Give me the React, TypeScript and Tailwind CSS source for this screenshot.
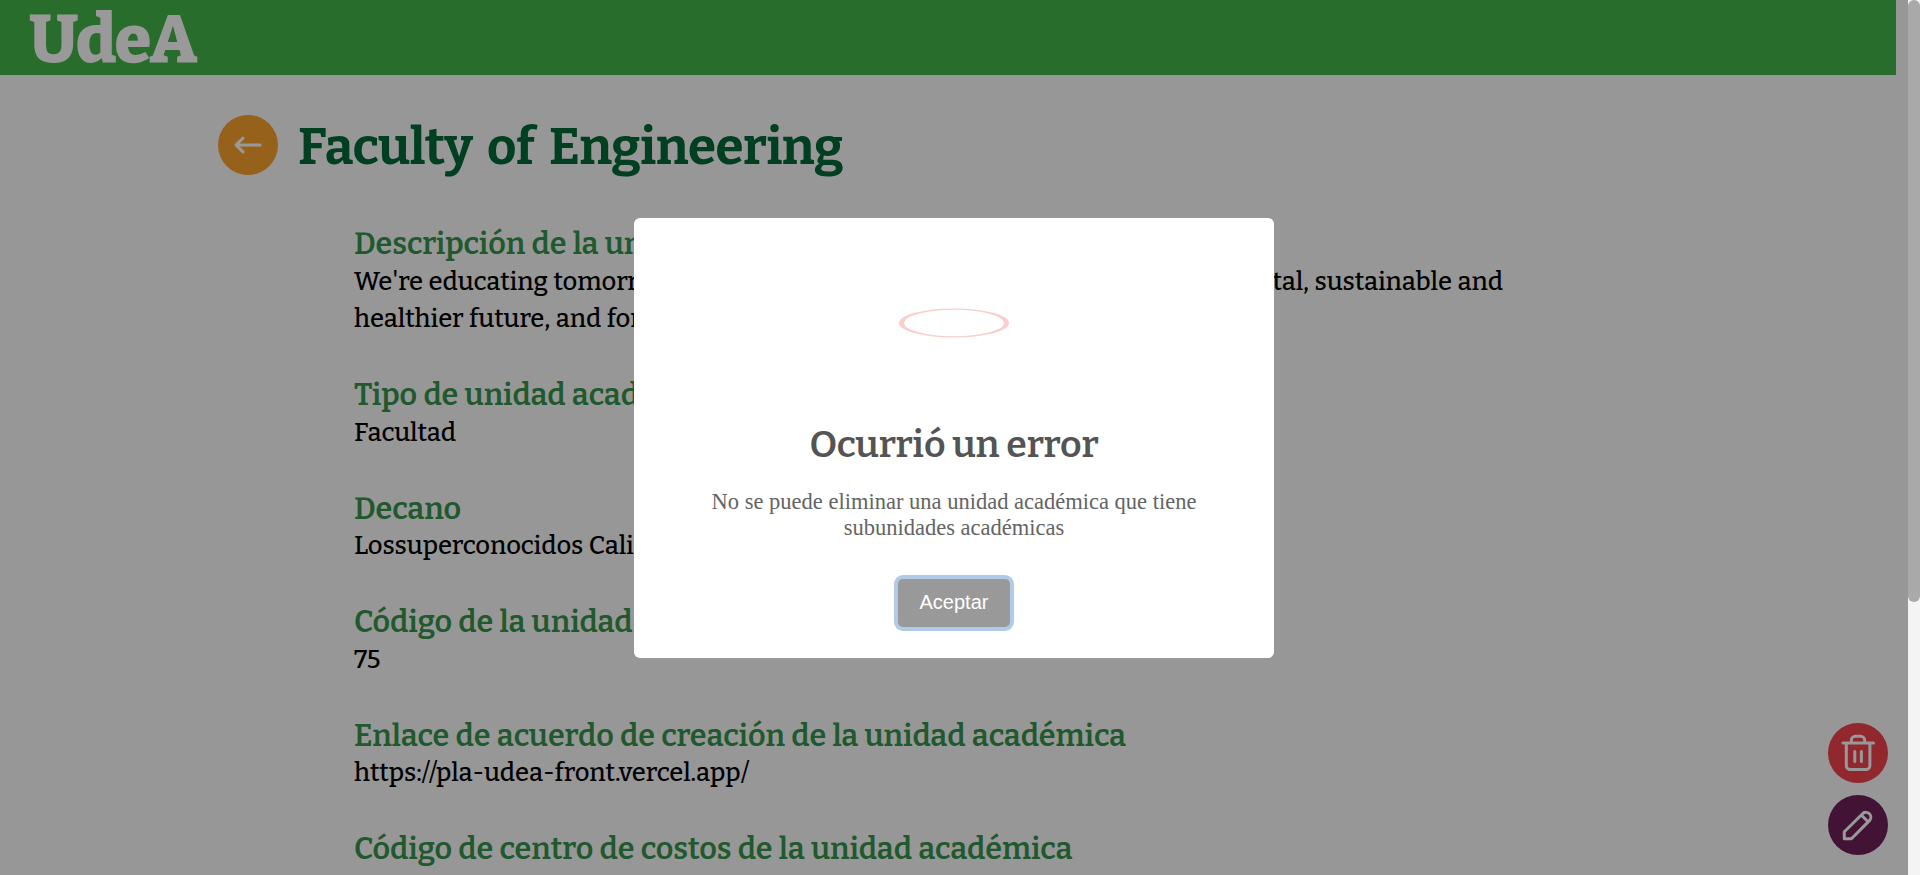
import type { ReactNode } from "react";

const slab = "font-['Bitter','Roboto_Serif','DejaVu_Serif',serif]";

const fields: { label: string; lines: ReactNode[] }[] = [
  {
    label: "Descripción de la unidad académica",
    lines: [
      <span className="flex w-[1149px] justify-between">
        <span>We're educating tomorrow's engineers and scientists for a</span>
        <span>digital, sustainable and</span>
      </span>,
      "healthier future, and for society",
    ],
  },
  { label: "Tipo de unidad académica", lines: ["Facultad"] },
  { label: "Decano", lines: ["Lossuperconocidos Cali"] },
  { label: "Código de la unidad", lines: ["75"] },
  {
    label: "Enlace de acuerdo de creación de la unidad académica",
    lines: ["https://pla-udea-front.vercel.app/"],
  },
  { label: "Código de centro de costos de la unidad académica", lines: [] },
];

function Field({ label, lines }: { label: string; lines: ReactNode[] }) {
  return (
    <div className="mb-[38.6px]">
      <h2 className="h-[37.5px] text-[30.5px] leading-[37.5px] font-semibold tracking-[-0.08px] whitespace-nowrap text-[#35944b] [word-spacing:0.7px]">
        {label}
      </h2>
      {lines.map((line, i) => (
        <p
          key={i}
          className="text-[25.6px] leading-[37.5px] font-medium tracking-[-0.1px] whitespace-nowrap text-black [word-spacing:0.8px]"
        >
          {line}
        </p>
      ))}
    </div>
  );
}

function ArrowIcon() {
  return (
    <svg viewBox="0 0 60 60" className="size-[60px]" fill="none" stroke="white" strokeWidth="3" strokeLinecap="round" strokeLinejoin="round">
      <path d="M42 30H18M25 23.2 18 30l7 6.8" />
    </svg>
  );
}

function TrashIcon() {
  return (
    <svg viewBox="0 0 60 60" className="size-[60px]" fill="none" stroke="white" strokeWidth="3" strokeLinecap="round" strokeLinejoin="round">
      <path d="M15 20h30.5M23.3 19.5v-2.2a4 4 0 0 1 4-4h5.4a4 4 0 0 1 4 4v2.2" />
      <path d="M18.3 20.5v22a4 4 0 0 0 4 4h15.6a4 4 0 0 0 4-4v-22M26.8 28.5v10M33.4 28.5v10" />
    </svg>
  );
}

function PencilIcon() {
  return (
    <svg viewBox="0 0 60 60" className="size-[60px]" fill="none" stroke="white" strokeWidth="3" strokeLinejoin="round">
      <path d="M16.3 43.7v-7L34.8 18.5a4.9 4.9 0 0 1 6.9 6.9L23.4 43.7zM33.3 20l6.900 6.900" />
    </svg>
  );
}

export default function App() {
  return (
    <div className="flex h-[875px] w-[1920px] overflow-hidden bg-[#fcfcfc]">
      <div className="relative h-full w-[1908px] overflow-hidden">
        <header className="h-[75px] w-[1896px] bg-[#43b649] pt-1 pl-[29px]">
          <span className={`${slab} block text-[67px] leading-[71px] font-extrabold tracking-[-2px] text-white`}>UdeA</span>
        </header>

        <main className={`${slab} pt-10 pl-[218px]`}>
          <div className="flex h-[60px] items-center gap-5">
            <button className="size-[60px] shrink-0 rounded-full bg-[#faa32d]">
              <ArrowIcon />
            </button>
            <h1 className="pt-[3px] text-[51px] leading-[60px] font-bold tracking-[-0.5px] whitespace-nowrap text-[#026937] [word-spacing:6px]">
              Faculty of Engineering
            </h1>
          </div>
          <section className="pt-[50px] pl-[136px]">
            {fields.map((f) => (
              <Field key={f.label} label={f.label} lines={f.lines} />
            ))}
          </section>
        </main>

        <div className="absolute right-5 bottom-5 flex flex-col gap-3">
          <button className="size-[60px] rounded-full bg-[#f1434c]">
            <TrashIcon />
          </button>
          <button className="size-[60px] rounded-full bg-[#70205b]">
            <PencilIcon />
          </button>
        </div>

        <div className="absolute inset-0 flex items-center justify-center bg-black/40">
          <div className="flex h-[440px] w-[640px] flex-col items-center rounded-[6px] bg-white">
            <div className="mt-[50px] size-[110px] scale-y-[0.264] rounded-full border-[5px] border-[#f27474] opacity-35" />
            <h2 className={`${slab} mt-[42px] text-[37.5px] leading-[50px] font-semibold tracking-[-0.15px] text-[#545454]`}>
              Ocurrió un error
            </h2>
            <p className="mt-[19px] text-center font-['Liberation_Serif',serif] text-[22.5px] leading-[26px] text-[#646464]">
              No se puede eliminar una unidad académica que tiene
              <br />
              subunidades académicas
            </p>
            <button className="mt-[38px] h-[48px] w-[112px] rounded-[5px] bg-[#999] pb-0.5 font-['Liberation_Sans',sans-serif] text-[20px] text-white shadow-[0_0_0_4px_#b1cbe6]">
              Aceptar
            </button>
          </div>
        </div>
      </div>

      <div className="h-full w-3 bg-[#f4f4f4]">
        <div className="h-[602px] w-3 rounded-full bg-[#a9a9a9]" />
      </div>
    </div>
  );
}
